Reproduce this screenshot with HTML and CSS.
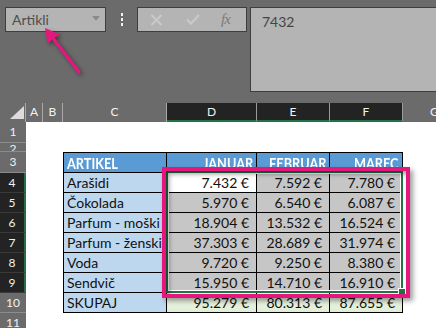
FILE: index.html
```html
<!DOCTYPE html>
<html>
<head>
<meta charset="utf-8">
<link rel="stylesheet" href="styles.css">
</head>
<body>
<div class="app">
  <div class="topbar">
    <div class="namebox"><span class="nb-text">Artikli</span><svg class="dd" width="8" height="5" viewBox="0 0 8 5"><path d="M0 0H8L4 4.5Z" fill="#8a8a8a"/></svg></div>
    <div class="dots"><i></i><i></i><i></i></div>
    <div class="fxbtns">
      <svg class="ico" width="13" height="12" viewBox="0 0 13 12"><path d="M1.5 1L11.5 11M11.5 1L1.5 11" stroke="#c9c9c9" stroke-width="2"/></svg>
      <svg class="ico" width="14" height="11" viewBox="0 0 14 11"><path d="M1 5.5L5 9.5L13 1" stroke="#c9c9c9" stroke-width="2.2" fill="none"/></svg>
      <span class="fx">fx</span>
    </div>
    <div class="formula">7432</div>
  </div>

  <div class="sheet">
    <div class="corner"><svg width="26" height="19" viewBox="0 0 26 19"><path d="M10 16H24V3Z" fill="#dcdcdc"/></svg></div>
    <div class="ch">A</div><div class="ch">B</div><div class="ch">C</div>
    <div class="ch sel">D</div><div class="ch sel">E</div><div class="ch sel">F</div>
    <div class="ch">G</div>

    <div class="rh">1</div><div class="blank span"></div>
    <div class="rh r2">2</div><div class="blank span"></div>

    <div class="rh">3</div><div class="blank span2"></div>
    <div class="t hd c top"><span>ARTIKEL</span></div><div class="t hd n top"><span>JANUAR</span></div><div class="t hd n top"><span>FEBRUAR</span></div><div class="t hd n top"><span>MAREC</span></div>
    <div class="blank"></div>

    <div class="rh sel">4</div><div class="blank span2"></div>
    <div class="t lb c">Arašidi</div><div class="t v act">7.432 €</div><div class="t v g">7.592 €</div><div class="t v g">7.780 €</div>
    <div class="blank"></div>

    <div class="rh sel">5</div><div class="blank span2"></div>
    <div class="t lb c">Čokolada</div><div class="t v g">5.970 €</div><div class="t v g">6.540 €</div><div class="t v g">6.087 €</div>
    <div class="blank"></div>

    <div class="rh sel">6</div><div class="blank span2"></div>
    <div class="t lb c">Parfum - moški</div><div class="t v g">18.904 €</div><div class="t v g">13.532 €</div><div class="t v g">16.524 €</div>
    <div class="blank"></div>

    <div class="rh sel">7</div><div class="blank span2"></div>
    <div class="t lb c">Parfum - ženski</div><div class="t v g">37.303 €</div><div class="t v g">28.689 €</div><div class="t v g">31.974 €</div>
    <div class="blank"></div>

    <div class="rh sel">8</div><div class="blank span2"></div>
    <div class="t lb c">Voda</div><div class="t v g">9.720 €</div><div class="t v g">9.250 €</div><div class="t v g">8.380 €</div>
    <div class="blank"></div>

    <div class="rh sel">9</div><div class="blank span2"></div>
    <div class="t lb c">Sendvič</div><div class="t v g">15.950 €</div><div class="t v g">14.710 €</div><div class="t v g">16.910 €</div>
    <div class="blank"></div>

    <div class="rh">10</div><div class="blank span2"></div>
    <div class="t lb c">SKUPAJ</div><div class="t v tot">95.279 €</div><div class="t v tot">80.313 €</div><div class="t v tot">87.655 €</div>
    <div class="blank"></div>

    <div class="rh">11</div><div class="blank span"></div>

    <div class="selbox"></div>
    <div class="handle"></div>
    <div class="frame"></div>
  </div>

  <svg class="arrow" width="100" height="90" viewBox="0 0 100 90">
    <path d="M79 72L52 37" stroke="#e6177c" stroke-width="3.2" stroke-linecap="round"/>
    <path d="M45 28L59.5 34.5L53.5 38.5L47.5 43.5Z" fill="#e6177c"/>
  </svg>
</div>
</body>
</html>
```

FILE: styles.css
```css
* { box-sizing: border-box; }
html, body { margin: 0; padding: 0; }
body { background: #6b6b6b; }

.app {
  position: relative;
  width: 436px;
  height: 328px;
  overflow: hidden;
  background: #6b6b6b;
  font-family: Lato, "Liberation Sans", sans-serif;
}

/* ---------- top bar ---------- */
.topbar {
  display: flex;
  align-items: flex-start;
  height: 103px;
  padding: 7px 0 0 5px;
}
.namebox {
  width: 101px;
  height: 25px;
  flex: none;
  display: flex;
  align-items: center;
  justify-content: space-between;
  padding: 0 5px 0 6px;
  background: #b4b4b4;
  border: 1px solid #3e3e3e;
}
.nb-text { font-size: 14px; color: #4e4e4e; line-height: 20px; }
.dd { margin-top: -2px; }
.dots {
  width: 31px;
  height: 25px;
  flex: none;
  display: flex;
  flex-direction: column;
  align-items: center;
  justify-content: center;
  gap: 2.5px;
}
.dots i { display: block; width: 2px; height: 2.5px; background: #f2f2f2; }
.fxbtns {
  width: 110px;
  height: 25px;
  flex: none;
  margin-right: 3px;
  display: flex;
  align-items: center;
  padding-left: 12px;
  gap: 23px;
  background: #b4b4b4;
  border: 1px solid #3e3e3e;
}
.fx {
  font-family: "Liberation Serif", serif;
  font-style: italic;
  font-size: 15px;
  color: #7b7b7b;
  margin-left: -2px;
  letter-spacing: -1px;
}
.formula {
  flex: 1;
  height: 85px;
  margin-right: -5px;
  background: #b4b4b4;
  border: 1px solid #3e3e3e;
  padding: 4px 0 0 11px;
  font-size: 14px;
  line-height: 20px;
  color: #454545;
}

/* ---------- sheet ---------- */
.sheet {
  position: relative;
  display: grid;
  grid-template-columns: 26px 17px 20px 104px 90px 73px 73px 64px;
  grid-template-rows: 19px 21px 9px 21px repeat(7, 20px) 20px;
  width: 467px;
  background: #fff;
}
.corner { background: #6b6b6b; border-right: 1px solid #a8a8a8; }
.corner svg { display: block; }
.ch {
  background: #6b6b6b;
  color: #f2f2f2;
  border-right: 1px solid #a8a8a8;
  font-size: 12px;
  line-height: 17px;
  text-align: center;
}
.ch.sel {
  background: #232323;
  border-bottom: 2px solid #217346;
  border-right-color: #9a9a9a;
}
.rh {
  background: #6b6b6b;
  color: #f2f2f2;
  border-bottom: 1px solid #8c8c8c;
  font-size: 12px;
  line-height: 19px;
  text-align: center;
  overflow: hidden;
}
.rh.r2 { line-height: 12px; }
.rh.sel {
  background: #232323;
  border-right: 2px solid #217346;
  border-bottom-color: #3a3a3a;
}
.blank { background: #fff; }
.span { grid-column: 2 / -1; }
.span2 { grid-column: span 2; }

.t {
  border-right: 1px solid #000;
  border-bottom: 1px solid #000;
  font-size: 14px;
  line-height: 19px;
  color: #111;
  white-space: nowrap;
  overflow: hidden;
}
.t.c { border-left: 1px solid #000; padding-left: 3px; }
.t.top { border-top: 1px solid #000; }
.hd {
  background: #5b9bd5;
  color: #fff;
  font-weight: 700;
  font-size: 15px;
  line-height: 20px;
}
.hd span { display: inline-block; transform: scaleX(0.85); }
.hd.c span { transform-origin: left center; }
.hd.n { text-align: right; padding-right: 3px; }
.hd.n span { transform-origin: right center; }
.lb { background: #bdd7ee; }
.v { text-align: right; padding-right: 7px; }
.act { background: #fff; }
.g { background: #c6c6c6; }
.tot { background: linear-gradient(#f3f8eb, #e0eed6); }

/* ---------- overlays ---------- */
.selbox {
  position: absolute;
  left: 166px;
  top: 68px;
  width: 237px;
  height: 122px;
  border: 2px solid #217346;
  box-shadow: inset 0 0 0 1px #fff;
}
.handle {
  position: absolute;
  left: 398px;
  top: 185px;
  width: 8px;
  height: 8px;
  background: #217346;
  border: 1px solid #fff;
}
.frame {
  position: absolute;
  left: 162px;
  top: 64px;
  width: 248px;
  height: 131px;
  border: 4px solid #e6177c;
  box-shadow: 3px 3px 5px rgba(0,0,0,0.38), inset 3px 3px 5px rgba(0,0,0,0.38);
}
.arrow {
  position: absolute;
  left: 0;
  top: 0;
  filter: drop-shadow(2px 2px 2px rgba(0,0,0,0.45));
}
```
